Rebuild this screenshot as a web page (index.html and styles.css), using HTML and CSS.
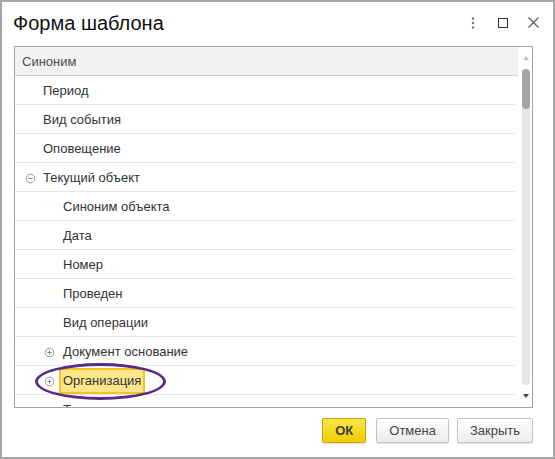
FILE: index.html
```html
<!DOCTYPE html>
<html lang="ru">
<head>
<meta charset="utf-8">
<title>Форма шаблона</title>
<link rel="stylesheet" href="styles.css">
</head>
<body>
<div class="window">
  <div class="titlebar">
    <div class="title">Форма шаблона</div>
    <div class="controls">
      <span class="ctl">
        <svg width="4" height="12" viewBox="0 0 4 12"><circle cx="2" cy="1.5" r="1.2" fill="#777"/><circle cx="2" cy="6" r="1.2" fill="#777"/><circle cx="2" cy="10.5" r="1.2" fill="#777"/></svg>
      </span>
      <span class="ctl">
        <svg width="10" height="10" viewBox="0 0 10 10"><rect x="0.5" y="0.5" width="9" height="9" fill="none" stroke="#333" stroke-width="1"/></svg>
      </span>
      <span class="ctl">
        <svg width="11" height="11" viewBox="0 0 11 11"><path d="M0.5 0.5 L10.5 10.5 M10.5 0.5 L0.5 10.5" stroke="#555" stroke-width="1.1" fill="none"/></svg>
      </span>
    </div>
  </div>

  <div class="grid">
    <div class="grid-main">
      <div class="grid-head">Синоним</div>
      <div class="rows">
        <div class="row"><span class="exp"></span><span class="cell">Период</span></div>
        <div class="row"><span class="exp"></span><span class="cell">Вид события</span></div>
        <div class="row"><span class="exp"></span><span class="cell">Оповещение</span></div>
        <div class="row"><span class="exp"><svg width="11" height="11" viewBox="0 0 11 11"><circle cx="5.5" cy="5.5" r="4.3" fill="none" stroke="#999" stroke-width="1"/><path d="M3.3 5.5 H7.7" stroke="#888" stroke-width="1"/></svg></span><span class="cell">Текущий объект</span></div>
        <div class="row lvl1"><span class="exp"></span><span class="cell">Синоним объекта</span></div>
        <div class="row lvl1"><span class="exp"></span><span class="cell">Дата</span></div>
        <div class="row lvl1"><span class="exp"></span><span class="cell">Номер</span></div>
        <div class="row lvl1"><span class="exp"></span><span class="cell">Проведен</span></div>
        <div class="row lvl1"><span class="exp"></span><span class="cell">Вид операции</span></div>
        <div class="row lvl1"><span class="exp"><svg width="11" height="11" viewBox="0 0 11 11"><circle cx="5.5" cy="5.5" r="4.3" fill="none" stroke="#999" stroke-width="1"/><path d="M3.3 5.5 H7.7 M5.5 3.3 V7.7" stroke="#888" stroke-width="1"/></svg></span><span class="cell">Документ основание</span></div>
        <div class="row lvl1 marked"><span class="exp"><svg width="11" height="11" viewBox="0 0 11 11"><circle cx="5.5" cy="5.5" r="4.3" fill="none" stroke="#999" stroke-width="1"/><path d="M3.3 5.5 H7.7 M5.5 3.3 V7.7" stroke="#888" stroke-width="1"/></svg></span><span class="cell selected">Организация</span><span class="ring"></span></div>
        <div class="row lvl1"><span class="exp"></span><span class="cell">Тип документа</span></div>
      </div>
    </div>
    <div class="scrollbar">
      <div class="arrow-up"></div>
      <div class="track"><div class="thumb"></div></div>
      <div class="arrow-down"></div>
    </div>
  </div>

  <div class="footer">
    <button class="btn btn-ok">ОК</button>
    <button class="btn btn-cancel">Отмена</button>
    <button class="btn">Закрыть</button>
  </div>
</div>
</body>
</html>
```

FILE: styles.css
```css
html, body {
  margin: 0;
  padding: 0;
  background: #ffffff;
}

.window {
  box-sizing: border-box;
  width: 555px;
  height: 459px;
  border: 2px solid #a6a6a6;
  background: #ffffff;
  font-family: "Liberation Sans", Arial, sans-serif;
  color: #333333;
  display: flex;
  flex-direction: column;
  overflow: hidden;
}

.titlebar {
  box-sizing: border-box;
  height: 44px;
  padding: 8px 5px 0 11px;
  display: flex;
  align-items: flex-start;
}

.title {
  margin-top: 2px;
  font-size: 20px;
  line-height: 23px;
  color: #111111;
}

.controls {
  margin-left: auto;
  display: flex;
}

.ctl {
  width: 30px;
  height: 25px;
  display: flex;
  align-items: center;
  justify-content: center;
}

.grid {
  box-sizing: border-box;
  height: 362px;
  margin: 0 20px 0 12px;
  border: 1px solid #a3a3a3;
  display: flex;
  overflow: hidden;
}

.grid-main {
  flex: 1;
  overflow: hidden;
  display: flex;
  flex-direction: column;
}

.grid-head {
  box-sizing: border-box;
  height: 29px;
  flex: none;
  background: #f2f2f2;
  border-bottom: 1px solid #cfcfcf;
  padding: 1px 0 0 7px;
  font-size: 13px;
  line-height: 28px;
  color: #4d4d4d;
}

.rows {
  flex: 1;
  overflow: hidden;
}

.row {
  position: relative;
  box-sizing: border-box;
  height: 29px;
  border-bottom: 1px solid #e6e6e6;
  margin-right: 3px;
  padding: 2px 0 0 8px;
  display: flex;
  align-items: center;
  font-size: 13px;
  color: #333333;
}

.row.lvl1 {
  padding-left: 27px;
}

.exp {
  width: 15px;
  height: 15px;
  margin-right: 5px;
  flex: none;
  display: flex;
  align-items: center;
  justify-content: center;
}

.row.lvl1 .exp {
  margin-right: 6px;
}

.cell {
  line-height: 18px;
  white-space: nowrap;
}

.cell.selected {
  margin-left: -4px;
  padding: 2px 2px;
  border: 2px solid #f5c31c;
  background: #fee78a;
}

.ring {
  position: absolute;
  left: 20px;
  top: -3px;
  width: 131px;
  height: 37px;
  box-sizing: border-box;
  border: 3px solid #5b2a88;
  border-radius: 50%;
  pointer-events: none;
}

.scrollbar {
  width: 14px;
  flex: none;
  display: flex;
  flex-direction: column;
  align-items: center;
  padding-left: 2px;
  box-sizing: border-box;
}

.arrow-up {
  height: 21px;
  flex: none;
  display: flex;
  align-items: center;
  justify-content: center;
}

.arrow-up::before {
  content: "";
  width: 0;
  height: 0;
  border-left: 3px solid transparent;
  border-right: 3px solid transparent;
  border-bottom: 4px solid #c4c4c4;
}

.track {
  flex: 1;
  width: 8px;
  margin-top: 1px;
  background: #e6e6e6;
  border-radius: 4px;
}

.thumb {
  height: 40px;
  background: #a6a6a6;
  border-radius: 4px;
}

.arrow-down {
  height: 22px;
  flex: none;
  display: flex;
  align-items: center;
  justify-content: center;
}

.arrow-down::before {
  content: "";
  width: 0;
  height: 0;
  border-left: 3px solid transparent;
  border-right: 3px solid transparent;
  border-top: 4px solid #444444;
}

.footer {
  display: flex;
  justify-content: flex-end;
  padding: 10px 20px 0 0;
}

.btn {
  box-sizing: border-box;
  height: 25px;
  padding: 0 12px;
  margin-left: 8px;
  border: 1px solid #c4c4c4;
  border-radius: 2px;
  background: linear-gradient(#ffffff, #ececec);
  box-shadow: 0 1px 1px rgba(0, 0, 0, 0.12);
  font-family: "Liberation Sans", Arial, sans-serif;
  font-size: 13px;
  color: #444444;
}

.btn-ok {
  font-weight: bold;
  color: #3d3d3d;
  border-color: #c7a600;
  background: linear-gradient(#fbe44a, #f0cd00);
}

.btn-cancel {
  margin-left: 10px;
}
```
